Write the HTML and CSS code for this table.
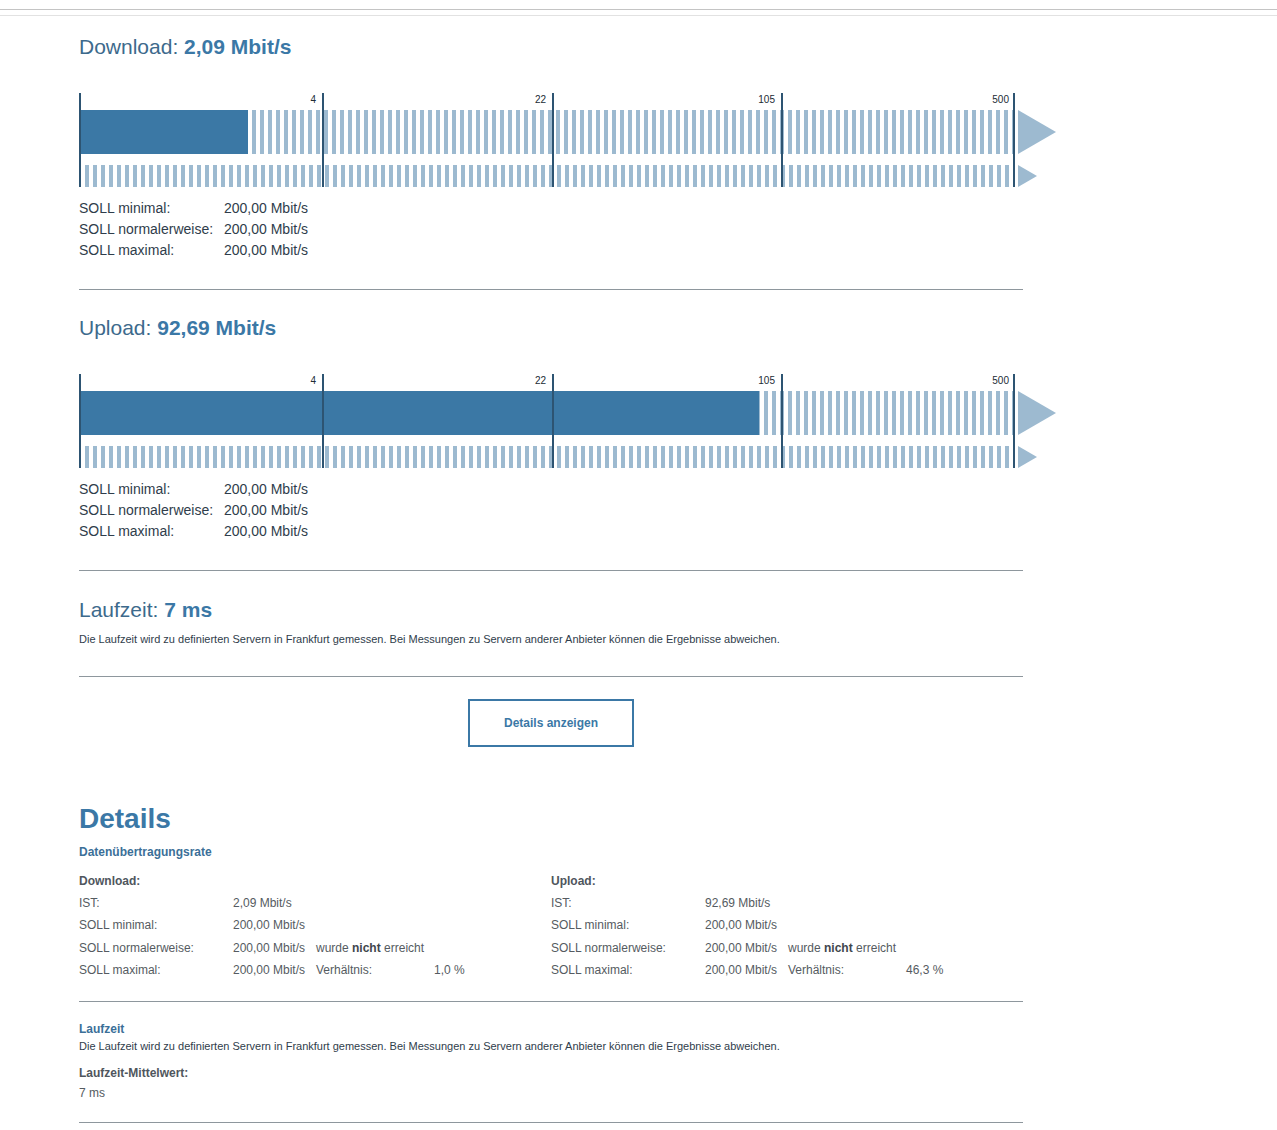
FILE: index.html
```html
<!DOCTYPE html>
<html lang="de">
<head>
<meta charset="utf-8">
<title>Messergebnis</title>
<link rel="stylesheet" href="styles.css">
</head>
<body>
<div class="topbar"></div>
<div class="topbar2"></div>
<main class="page">

  <section class="block block-first">
    <h2 class="metric"><span>Download:</span> <strong>2,09 Mbit/s</strong></h2>
    <div class="scale">
      <div class="ticks">
        <div class="seg"><span>4</span></div>
        <div class="seg"><span>22</span></div>
        <div class="seg"><span>105</span></div>
        <div class="seg seg-last"><span>500</span></div>
        <div class="seg seg-end"></div>
      </div>
      <div class="bar-row">
        <div class="bar bar-main"><div class="fill" style="width:169px"></div></div>
        <div class="arrow arrow-main"></div>
      </div>
      <div class="bar-row bar-row-target">
        <div class="bar bar-target"></div>
        <div class="arrow arrow-target"></div>
      </div>
    </div>
    <dl class="soll">
      <dt>SOLL minimal:</dt><dd>200,00 Mbit/s</dd>
      <dt>SOLL normalerweise:</dt><dd>200,00 Mbit/s</dd>
      <dt>SOLL maximal:</dt><dd>200,00 Mbit/s</dd>
    </dl>
  </section>

  <section class="block">
    <h2 class="metric"><span>Upload:</span> <strong>92,69 Mbit/s</strong></h2>
    <div class="scale">
      <div class="ticks">
        <div class="seg"><span>4</span></div>
        <div class="seg"><span>22</span></div>
        <div class="seg"><span>105</span></div>
        <div class="seg seg-last"><span>500</span></div>
        <div class="seg seg-end"></div>
      </div>
      <div class="bar-row">
        <div class="bar bar-main"><div class="fill" style="width:680px"></div></div>
        <div class="arrow arrow-main"></div>
      </div>
      <div class="bar-row bar-row-target">
        <div class="bar bar-target"></div>
        <div class="arrow arrow-target"></div>
      </div>
    </div>
    <dl class="soll">
      <dt>SOLL minimal:</dt><dd>200,00 Mbit/s</dd>
      <dt>SOLL normalerweise:</dt><dd>200,00 Mbit/s</dd>
      <dt>SOLL maximal:</dt><dd>200,00 Mbit/s</dd>
    </dl>
  </section>

  <section class="block block-latency">
    <h2 class="metric"><span>Laufzeit:</span> <strong>7 ms</strong></h2>
    <p class="note note-main">Die Laufzeit wird zu definierten Servern in Frankfurt gemessen. Bei Messungen zu Servern anderer Anbieter können die Ergebnisse abweichen.</p>
  </section>

  <div class="actions">
    <button class="details-btn" type="button">Details anzeigen</button>
  </div>

  <section class="details">
    <h1 class="details-title">Details</h1>
    <h3 class="sub">Datenübertragungsrate</h3>
    <div class="rates">
      <div class="rate-col">
        <div class="kv-head">Download:</div>
        <div class="kv-rows">
          <div class="kv"><span>IST:</span><span>2,09 Mbit/s</span></div>
          <div class="kv"><span>SOLL minimal:</span><span>200,00 Mbit/s</span></div>
          <div class="kv"><span>SOLL normalerweise:</span><span>200,00 Mbit/s</span><span class="span2">wurde <b>nicht</b> erreicht</span></div>
          <div class="kv"><span>SOLL maximal:</span><span>200,00 Mbit/s</span><span>Verhältnis:</span><span>1,0 %</span></div>
        </div>
      </div>
      <div class="rate-col">
        <div class="kv-head">Upload:</div>
        <div class="kv-rows">
          <div class="kv"><span>IST:</span><span>92,69 Mbit/s</span></div>
          <div class="kv"><span>SOLL minimal:</span><span>200,00 Mbit/s</span></div>
          <div class="kv"><span>SOLL normalerweise:</span><span>200,00 Mbit/s</span><span class="span2">wurde <b>nicht</b> erreicht</span></div>
          <div class="kv"><span>SOLL maximal:</span><span>200,00 Mbit/s</span><span>Verhältnis:</span><span>46,3 %</span></div>
        </div>
      </div>
    </div>
  </section>

  <section class="latency-detail">
    <h4 class="sub-small">Laufzeit</h4>
    <p class="note note-detail">Die Laufzeit wird zu definierten Servern in Frankfurt gemessen. Bei Messungen zu Servern anderer Anbieter können die Ergebnisse abweichen.</p>
    <div class="kv-head kv-head-latency">Laufzeit-Mittelwert:</div>
    <div class="latency-value">7 ms</div>
  </section>

</main>
</body>
</html>
```

FILE: styles.css
```css
html, body {
  margin: 0;
  padding: 0;
  background: #ffffff;
}

body {
  font-family: "Liberation Sans", Arial, sans-serif;
  color: #333333;
}

.topbar {
  height: 9px;
  border-bottom: 1px solid #c4c4c4;
}

.topbar2 {
  height: 5px;
  border-bottom: 1px solid #e2e2e2;
}

.page {
  width: 944px;
  margin-left: 79px;
}

/* ---- measurement blocks ---- */
.block {
  padding: 26px 0 28px;
  border-bottom: 1px solid #8e979d;
}

.block-first {
  padding-top: 19px;
}

.block-latency {
  padding-top: 27px;
  padding-bottom: 28px;
}

.metric {
  margin: 0;
  font-size: 21px;
  line-height: 24px;
  font-weight: normal;
  color: #3d6a8c;
}

.metric strong {
  font-weight: bold;
  color: #3b78a6;
}

/* ---- scale chart ---- */
.scale {
  position: relative;
  margin-top: 34px;
  padding-top: 17px;
  width: 980px;
}

.ticks {
  position: absolute;
  top: 0;
  left: 0;
  height: 94px;
  display: grid;
  grid-template-columns: 243px 230px 229px 232px 2px;
  z-index: 2;
}

.seg {
  box-sizing: border-box;
  border-left: 2px solid #2d5472;
  text-align: right;
  padding: 1px 6px 0 0;
  font-size: 10px;
  line-height: 12px;
  color: #222c35;
}

.seg-last {
  padding-right: 4px;
}

.seg-end {
  padding: 0;
}

.bar-row {
  display: flex;
  align-items: center;
}

.bar-row-target {
  margin-top: 11px;
}

.bar {
  width: 936px;
  position: relative;
}

.bar-main {
  height: 44px;
  background: repeating-linear-gradient(90deg,
    #9dbad0 0 1px, transparent 1px 5px, #9dbad0 5px 8px);
}

.bar-target {
  height: 22px;
  background: repeating-linear-gradient(90deg,
    #9dbad0 0 2px, transparent 2px 6px, #9dbad0 6px 8px);
}

.fill {
  height: 100%;
  background: #3b78a5;
}

.arrow {
  width: 0;
  height: 0;
  margin-left: 3px;
  border-style: solid;
  border-color: transparent transparent transparent #9dbad0;
}

.arrow-main {
  border-width: 22px 0 22px 38px;
}

.arrow-target {
  border-width: 11px 0 11px 19px;
}

/* ---- SOLL list ---- */
.soll {
  margin: 11px 0 0;
  display: grid;
  grid-template-columns: 145px max-content;
  justify-content: start;
  font-size: 14px;
  line-height: 21px;
  color: #2f3d4b;
}

.soll dt,
.soll dd {
  margin: 0;
}

.note {
  margin: 0;
  font-size: 11px;
  color: #2f3d4b;
}

.note-main {
  margin-top: 9px;
  line-height: 16px;
}

.block-latency .note-main {
  padding-bottom: 1px;
}

/* ---- button ---- */
.actions {
  display: flex;
  justify-content: center;
  padding-top: 22px;
}

.details-btn {
  box-sizing: border-box;
  width: 166px;
  height: 48px;
  border: 2px solid #3b78a6;
  background: #ffffff;
  color: #3b78a6;
  font-family: "Liberation Sans", Arial, sans-serif;
  font-size: 12px;
  font-weight: bold;
  padding: 0;
  cursor: pointer;
}

/* ---- details ---- */
.details-title {
  margin: 56px 0 0;
  font-size: 28px;
  line-height: 32px;
  font-weight: bold;
  color: #3b78a6;
}

.sub {
  margin: 9px 0 0;
  font-size: 12px;
  line-height: 16px;
  font-weight: bold;
  color: #3b6f98;
}

.rates {
  margin-top: 13px;
  padding-bottom: 19px;
  border-bottom: 1px solid #8e979d;
  display: grid;
  grid-template-columns: 1fr 1fr;
}

.kv-head {
  font-size: 12px;
  line-height: 16px;
  font-weight: bold;
  color: #4f565d;
}

.kv-rows {
  margin-top: 3px;
}

.kv {
  display: grid;
  grid-template-columns: 154px 83px 118px auto;
  font-size: 12px;
  line-height: 22.4px;
  color: #555b61;
  white-space: nowrap;
}

.kv .span2 {
  grid-column: 3 / 5;
}

.kv b {
  color: #3f464d;
}

.latency-detail {
  padding: 20px 0 21px;
  border-bottom: 1px solid #8e979d;
}

.sub-small {
  margin: 0;
  font-size: 12px;
  line-height: 14px;
  font-weight: bold;
  color: #3b6f98;
}

.note-detail {
  margin-top: 2px;
  line-height: 16px;
}

.kv-head-latency {
  margin-top: 11px;
}

.latency-value {
  margin-top: 4px;
  font-size: 12px;
  line-height: 16px;
  color: #555b61;
}
```
